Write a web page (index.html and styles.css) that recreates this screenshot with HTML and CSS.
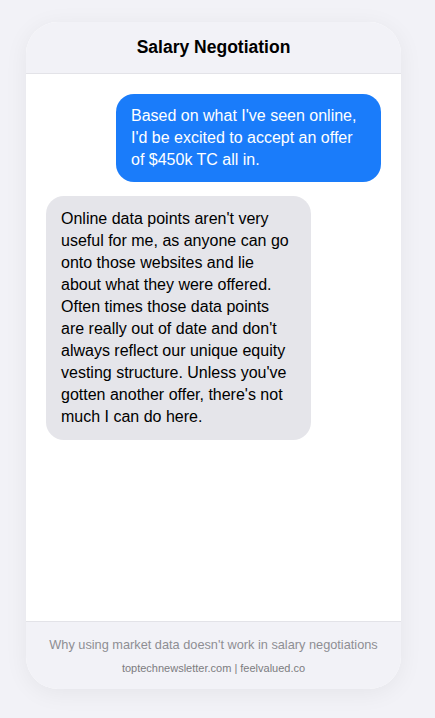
FILE: index.html
```html
<!DOCTYPE html>
<html lang="en">
<head>
<meta charset="utf-8">
<title>Salary Negotiation</title>
<link rel="stylesheet" href="styles.css">
</head>
<body>
<div class="phone">
  <header class="header">Salary Negotiation</header>
  <main class="chat">
    <div class="bubble sent">Based on what I've seen online, I'd be excited to accept an offer of $450k TC all in.</div>
    <div class="bubble received">Online data points aren't very useful for me, as anyone can go onto those websites and lie about what they were offered. Often times those data points are really out of date and don't always reflect our unique equity vesting structure. Unless you've gotten another offer, there's not much I can do here.</div>
  </main>
  <footer class="footer">
    <div class="caption">Why using market data doesn't work in salary negotiations</div>
    <div class="source">toptechnewsletter.com | feelvalued.co</div>
  </footer>
</div>
</body>
</html>
```

FILE: styles.css
```css
* { box-sizing: border-box; }
html, body { margin: 0; padding: 0; }
body {
  background: #f2f2f7;
  font-family: "Liberation Sans", Arial, sans-serif;
  width: 435px;
  height: 718px;
  padding-top: 22px;
  padding-left: 26px;
}
.phone {
  width: 375px;
  height: 667px;
  background: #fff;
  border-radius: 32px;
  overflow: hidden;
  display: flex;
  flex-direction: column;
  box-shadow: 0 4px 24px rgba(0,0,0,0.06);
}
.header {
  height: 52px;
  flex: none;
  background: #f2f2f7;
  border-bottom: 1px solid #e3e3e8;
  display: flex;
  align-items: center;
  justify-content: center;
  font-size: 17.5px;
  font-weight: 700;
  color: #000;
}
.chat {
  flex: 1;
  display: flex;
  flex-direction: column;
  gap: 14px;
  padding: 20px 20px;
}
.bubble {
  width: 265px;
  font-size: 16px;
  line-height: 22px;
  padding: 11px 15px;
  border-radius: 18px;
}
.sent {
  align-self: flex-end;
  background: #1a7cfa;
  color: #fff;
}
.received {
  align-self: flex-start;
  background: #e5e5ea;
  color: #000;
  padding-top: 12px;
  padding-bottom: 12px;
}
.footer {
  height: 68px;
  flex: none;
  background: #f2f2f7;
  border-top: 1px solid #e3e3e8;
  display: flex;
  flex-direction: column;
  align-items: center;
  padding-top: 15px;
  gap: 10px;
}
.caption {
  font-size: 12.75px;
  color: #8e8e93;
}
.source {
  font-size: 11px;
  color: #7c7c80;
}
```
